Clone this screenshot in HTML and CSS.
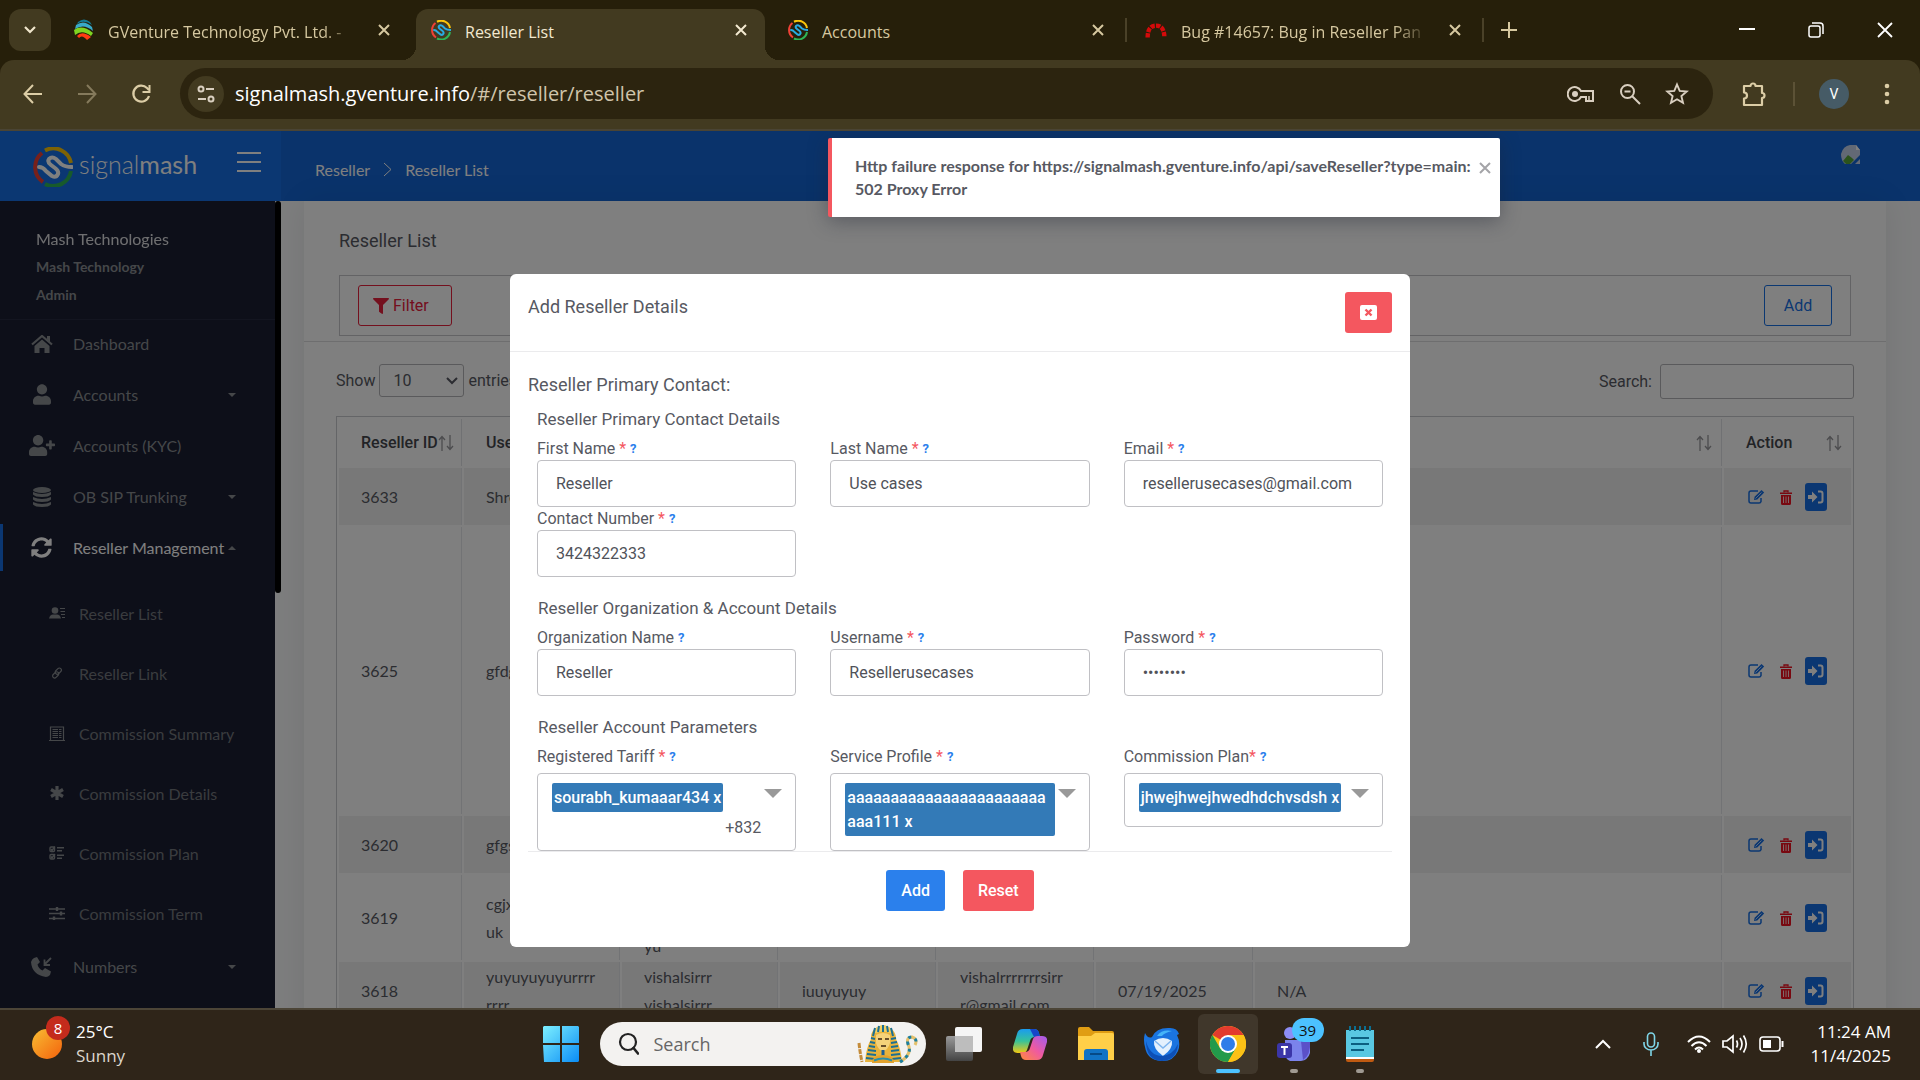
FILE: index.html
```html
<!DOCTYPE html>
<html lang="en">
<head>
<meta charset="utf-8">
<title>Reseller List</title>
<link rel="stylesheet" href="styles.css">
</head>
<body>
<svg class="sprite" aria-hidden="true">
  <symbol id="i-close" viewBox="0 0 14 14"><path d="M2 2l10 10M12 2L2 12" fill="none" stroke="currentColor" stroke-width="2"/></symbol>
  <symbol id="i-mash" viewBox="0 0 40 40"><g fill="none" stroke-width="4">
    <path d="M12 3.500A18 18 0 0 1 38 16" stroke="#fbc50b"/><path d="M10 35A18 18 0 0 1 9 6" stroke="#ef4136"/><path d="M38 24A18 18 0 0 1 12 37" stroke="#2fb457"/>
    <path d="M6 20Q10 20 13 24L19 29Q23 31 25 27Q26 24 22 21L18 18Q14 15 16 12Q19 9 23 12L28 17Q32 20 39 20" stroke="var(--mark, #29abe2)" stroke-linecap="round"/></g></symbol>
  <symbol id="i-sort" viewBox="0 0 16 16"><path d="M4 16V2M1 5l3-3.500L7 5M12 0v14M9 11l3 3.500 3-3.500" fill="none" stroke="currentColor" stroke-width="1.300"/></symbol>
  <symbol id="i-edit" viewBox="0 0 17 16"><path d="M13 9v3.500A2 2 0 0 1 11 14H3a2 2 0 0 1-2-2V4a2 2 0 0 1 2-2h7" fill="none" stroke="currentColor" stroke-width="1.500"/><path d="M6 11l.6-3.200L13.500 1l2.700 2.600L9.300 10.400z" fill="currentColor"/><path d="M7.500 9.500l6-6" stroke="#fff" stroke-width=".7"/></symbol>
  <symbol id="i-trash" viewBox="0 0 12 15"><path d="M4 2.500V1h4v1.500" fill="none" stroke="currentColor" stroke-width="1.300"/><path d="M0 2.500h12V4H0zM1 5h10v8.500a1.500 1.500 0 0 1-1.500 1.500h-7A1.500 1.500 0 0 1 1 13.500z" fill="currentColor"/><path d="M3.500 6.500V13M6 6.500V13M8.500 6.500V13" stroke="#fff" stroke-width=".8"/></symbol>
  <symbol id="i-login" viewBox="0 0 16 14"><path d="M0 5h4V1.500L9.500 7 4 12.500V9H0z" fill="currentColor"/><path d="M10 1.500h2.500a2 2 0 0 1 2 2v7a2 2 0 0 1-2 2H10" fill="none" stroke="currentColor" stroke-width="2"/></symbol>
</svg>

<div class="tabstrip">
  <button class="tab-search" aria-label="Search tabs"><svg width="14" height="12" viewBox="0 0 14 12"><path d="M2 3l5 5 5-5" fill="none" stroke="currentColor" stroke-width="2.200"/></svg></button>
  <div class="tab">
    <svg width="20" height="22" viewBox="0 0 20 22"><path d="M4 3Q10-2 16 3L18 6Q10 0 3 5z" fill="#147a96"/><path d="M2 6Q10 0 18 8L19 12Q10 4 1 10z" fill="#38a9c9"/><path d="M0 11Q8 5 19 14L17 17Q8 10 1 16z" fill="#7ed321"/><path d="M3 17Q8 11 17 18L13 21Q8 15 5 19z" fill="#ff3b12"/></svg>
    <span class="tab-title fade">GVenture Technology Pvt. Ltd. -</span>
    <button class="tab-close" aria-label="Close tab"><svg width="14" height="14"><use href="#i-close"/></svg></button>
  </div>
  <span class="tab-gap"></span>
  <div class="tab active">
    <svg width="20" height="20"><use href="#i-mash"/></svg>
    <span class="tab-title">Reseller List</span>
    <button class="tab-close" aria-label="Close tab"><svg width="14" height="14"><use href="#i-close"/></svg></button>
  </div>
  <span class="tab-gap"></span>
  <div class="tab">
    <svg width="20" height="20"><use href="#i-mash"/></svg>
    <span class="tab-title">Accounts</span>
    <button class="tab-close" aria-label="Close tab"><svg width="14" height="14"><use href="#i-close"/></svg></button>
  </div>
  <span class="tab-gap line"></span>
  <div class="tab">
    <svg width="22" height="17" viewBox="0 0 25 17"><path d="M3 16.500Q3 3 12.500 3T22 16.500" fill="none" stroke="#d40a0a" stroke-width="5" stroke-dasharray="5 1.200"/></svg>
    <span class="tab-title fade">Bug #14657: Bug in Reseller Pan</span>
    <button class="tab-close" aria-label="Close tab"><svg width="14" height="14"><use href="#i-close"/></svg></button>
  </div>
  <span class="tab-gap line"></span>
  <button class="new-tab" aria-label="New tab"><svg width="16" height="16"><path d="M8 0v16M0 8h16" stroke="currentColor" stroke-width="2"/></svg></button>
  <div class="window-buttons">
    <button aria-label="Minimize"><svg width="16" height="16"><path d="M0 7h16" stroke="currentColor" stroke-width="2"/></svg></button>
    <button aria-label="Restore"><svg width="16" height="16"><rect x="1" y="4" width="11" height="11" rx="2" fill="none" stroke="currentColor" stroke-width="1.500"/><path d="M4 1h8a3 3 0 0 1 3 3v8" fill="none" stroke="currentColor" stroke-width="1.500"/></svg></button>
    <button aria-label="Close"><svg width="16" height="16"><path d="M1 1l14 14M15 1L1 15" stroke="currentColor" stroke-width="1.800"/></svg></button>
  </div>
</div>

<div class="toolbar">
  <button class="nav" aria-label="Back"><svg width="20" height="20"><path d="M19 10H2M10 1L1.500 10 10 19" fill="none" stroke="currentColor" stroke-width="2"/></svg></button>
  <button class="nav off" aria-label="Forward"><svg width="20" height="20"><path d="M1 10h17M10 1l8.500 9L10 19" fill="none" stroke="currentColor" stroke-width="2"/></svg></button>
  <button class="nav" aria-label="Reload"><svg width="20" height="20"><path d="M18 12a8 8 0 1 1-2-8l2 2" fill="none" stroke="currentColor" stroke-width="2.200"/><path d="M18.500 1v7h-7" fill="none" stroke="currentColor" stroke-width="2"/></svg></button>
  <div class="omnibox">
    <button class="site-info" aria-label="Site information"><svg width="18" height="18"><g fill="none" stroke="currentColor" stroke-width="2"><circle cx="4" cy="4" r="2.500"/><path d="M9 4h8M1 14h8"/><circle cx="14" cy="14" r="2.500"/></g></svg></button>
    <span class="url"><b>signalmash.gventure.info</b>/#/reseller/reseller</span>
    <button aria-label="Passwords"><svg width="28" height="18" viewBox="0 0 28 18"><path d="M14 6a7 7 0 1 0 0 6h5v4h7V6z" fill="none" stroke="currentColor" stroke-width="2"/><circle cx="8" cy="9" r="3" fill="currentColor"/><path d="M22 11v4" stroke="currentColor" stroke-width="1.500"/></svg></button>
    <button aria-label="Zoom"><svg width="22" height="22"><circle cx="8.500" cy="8.500" r="6.500" fill="none" stroke="currentColor" stroke-width="2"/><path d="M13 13l8 8M5.500 8.500h6" stroke="currentColor" stroke-width="2"/></svg></button>
    <button aria-label="Bookmark"><svg width="24" height="24" viewBox="0 0 24 24"><path d="M12 2.500l2.700 6.400 7 .6-5.300 4.600 1.600 6.800-6-3.600-6 3.600 1.600-6.800L2.300 9.500l7-.6z" fill="none" stroke="currentColor" stroke-width="1.900"/></svg></button>
  </div>
  <button class="ext" aria-label="Extensions"><svg width="26" height="26" viewBox="0 0 26 26"><path d="M3 5h6.500a2.500 2.500 0 0 1 5 0H21v7a2.500 2.500 0 0 1 0 5v7H3v-6.500a3 3 0 0 0 0-6z" fill="none" stroke="currentColor" stroke-width="2.200" stroke-linejoin="round"/></svg></button>
  <span class="bar"></span>
  <button class="avatar" aria-label="Profile">V</button>
  <button class="dots" aria-label="Menu"><svg width="6" height="22"><g fill="currentColor"><circle cx="3" cy="3" r="2.300"/><circle cx="3" cy="11" r="2.300"/><circle cx="3" cy="19" r="2.300"/></g></svg></button>
</div>

<div class="page">
  <header class="topbar">
    <div class="brand">
      <svg class="brand-mark" width="40" height="40"><use href="#i-mash"/></svg>
      <span class="brand-name">signal<b>mash</b></span>
      <button class="burger" aria-label="Toggle menu"><svg width="24" height="20"><path d="M0 1h24M0 10h24M0 19h24" stroke="currentColor" stroke-width="2"/></svg></button>
    </div>
    <nav class="crumbs"><a href="#">Reseller</a><svg width="9" height="15"><path d="M1 1l7 6.500-7 6.500" fill="none" stroke="currentColor"/></svg><a href="#">Reseller List</a></nav>
    <svg class="broken" width="19" height="19" viewBox="0 0 19 19"><path d="M9 0h6l4 5v5l-9 9H4Q0 16 0 9 2 1 9 0z" fill="#c5d3ea"/><path d="M15 0v5h4z" fill="#fff"/><path d="M2 16l5-6 4 3 2 2-4 4H5z" fill="#57a639"/><path d="M19 14l-5 5h5z" fill="#c5d3ea"/></svg>
  </header>

  <div class="columns">
    <aside class="sidebar">
      <div class="who"><span>Mash Technologies</span><b>Mash Technology</b><b>Admin</b></div>
      <ul class="menu">
        <li><a href="#"><svg width="22" height="18" viewBox="0 0 22 18"><path d="M1 9.500L11 1l10 8.500" fill="none" stroke="currentColor" stroke-width="2.200"/><path d="M16 1h3v6l-3-2.500zM11 4.500l7.500 6.500v7h-5v-5h-5v5h-5v-7z" fill="currentColor"/></svg>Dashboard</a></li>
        <li><a href="#"><svg width="18" height="21" viewBox="0 0 448 512"><path fill="currentColor" d="M224 256c70.700 0 128-57.300 128-128S294.700 0 224 0 96 57.300 96 128s57.300 128 128 128zm89.600 32h-16.700c-22.200 10.200-46.900 16-72.900 16s-50.600-5.800-72.900-16h-16.700C60.200 288 0 348.200 0 422.400V464c0 26.500 21.500 48 48 48h352c26.500 0 48-21.500 48-48v-41.600c0-74.200-60.200-134.400-134.400-134.400z"/></svg>Accounts<i class="caret"></i></a></li>
        <li><a href="#"><svg width="26" height="21" viewBox="0 0 640 512"><path fill="currentColor" d="M624 208h-64v-64c0-8.800-7.200-16-16-16h-32c-8.800 0-16 7.200-16 16v64h-64c-8.800 0-16 7.200-16 16v32c0 8.800 7.200 16 16 16h64v64c0 8.800 7.200 16 16 16h32c8.800 0 16-7.200 16-16v-64h64c8.800 0 16-7.200 16-16v-32c0-8.800-7.200-16-16-16zm-400 48c70.700 0 128-57.300 128-128S294.700 0 224 0 96 57.300 96 128s57.300 128 128 128zm89.600 32h-16.700c-22.200 10.200-46.900 16-72.900 16s-50.600-5.800-72.900-16h-16.700C60.200 288 0 348.200 0 422.400V464c0 26.500 21.500 48 48 48h352c26.500 0 48-21.500 48-48v-41.600c0-74.200-60.200-134.400-134.400-134.400z"/></svg>Accounts (KYC)</a></li>
        <li><a href="#"><svg width="18" height="20" viewBox="0 0 18 20"><g fill="currentColor"><ellipse cx="9" cy="3" rx="9" ry="3"/><path d="M0 5Q9 9 18 5v2.500Q16 10 9 10T0 7.500zM0 10Q9 14 18 10v2.500Q16 15 9 15T0 12.500zM0 15Q9 19 18 15v2.500Q16 20 9 20T0 17.500z"/></g></svg>OB SIP Trunking<i class="caret"></i></a></li>
        <li class="open"><a href="#"><svg width="21" height="21" viewBox="0 0 512 512"><path fill="currentColor" d="M370.720 133.280C339.458 104.008 298.888 87.962 255.848 88c-77.458.068-144.328 53.178-162.791 126.850-1.344 5.363-6.122 9.150-11.651 9.150H24.103c-7.498 0-13.194-6.807-11.807-14.176C33.933 94.924 134.813 8 256 8c66.448 0 126.791 26.136 171.315 68.685L463.030 40.970C478.149 25.851 504 36.559 504 57.941V192c0 13.255-10.745 24-24 24H345.941c-21.382 0-32.090-25.851-16.971-40.971l41.750-41.749zM32 296h134.059c21.382 0 32.090 25.851 16.971 40.971l-41.750 41.750c31.262 29.273 71.835 45.319 114.876 45.280 77.418-.07 144.315-53.144 162.787-126.849 1.344-5.363 6.122-9.150 11.651-9.150h57.304c7.498 0 13.194 6.807 11.807 14.176C478.067 417.076 377.187 504 256 504c-66.448 0-126.791-26.136-171.315-68.685L48.970 471.030C33.851 486.149 8 475.441 8 454.059V320c0-13.255 10.745-24 24-24z"/></svg>Reseller Management<i class="caret up"></i></a>
          <ul class="submenu">
            <li><a href="#"><svg width="16" height="12" viewBox="0 0 16 12"><g fill="currentColor"><circle cx="6" cy="3.500" r="3.300"/><path d="M0 11.500Q1 7.500 4 7.500h4q3 0 4 4z"/></g><path d="M11 1.500h5M11.500 4.500H16M12 7.500h4M13 10.500h3" stroke="currentColor"/></svg>Reseller List</a></li>
            <li><a href="#"><svg width="12" height="12" viewBox="0 0 12 12"><g fill="none" stroke="currentColor" stroke-width="1.200"><rect x="5.300" y=".6" width="4" height="7" rx="2" transform="rotate(45 7.300 4.100)"/><rect x="2.700" y="4.400" width="4" height="7" rx="2" transform="rotate(45 4.700 7.900)"/></g></svg>Reseller Link</a></li>
            <li><a href="#"><svg width="16" height="15" viewBox="0 0 16 15"><path d="M1.500 14V1h13v13M0 14.500h16" fill="none" stroke="currentColor" stroke-width="1.200"/><path d="M3.500 3.500h9M3.500 5.500h9M3.500 7.500h9M3.500 9.500h9M3.500 11.500h9" stroke="currentColor" stroke-dasharray="5.500 1"/></svg>Commission Summary</a></li>
            <li><a href="#"><svg width="14" height="14" viewBox="0 0 14 14"><path d="M7 0v14M1 3.500l12 7M13 3.500l-12 7" stroke="currentColor" stroke-width="3.200"/></svg>Commission Details</a></li>
            <li><a href="#"><svg width="16" height="14" viewBox="0 0 16 14"><g fill="none" stroke="currentColor" stroke-width="1.400"><rect x="1" y="1" width="4.500" height="4.500" rx="1"/><rect x="1" y="8.500" width="4.500" height="4.500" rx="1"/><path d="M8 1.700h7M8 4.700h5M8 9.200h7M8 12.200h5M2 3l1 1.500L6 .5M2 10.500L3 12l3-4"/></g></svg>Commission Plan</a></li>
            <li><a href="#"><svg width="16" height="13" viewBox="0 0 16 13"><path d="M0 2h16M0 6.500h16M0 11.500h16" stroke="currentColor" stroke-width="1.600"/><path d="M8 0v4M12 4.500v4M5 9.500v4" stroke="currentColor" stroke-width="2.400"/></svg>Commission Term</a></li>
          </ul>
        </li>
        <li><a href="#"><svg width="21" height="20" viewBox="0 0 21 20"><path d="M3 1l3-1 3 5-2.500 2.500q1 4 5 6L14 11l6 3.500-1 3.500q-2 2-4 2Q1 18 0 5 1 2 3 1z" fill="currentColor"/><path d="M20 1l-6 6M13.500 2.500V8H19" fill="none" stroke="currentColor" stroke-width="1.800"/></svg>Numbers<i class="caret"></i></a></li>
      </ul>
    </aside>
    <div class="rail"></div>

    <main class="content">
      <section class="card">
        <div class="card-head">
          <h1>Reseller List</h1>
          <div class="actions">
            <button class="btn outline-red"><svg width="16" height="16" viewBox="0 0 512 512"><path fill="currentColor" d="M487.976 0H24.028C2.710 0-8.047 25.866 7.058 40.971L192 225.941V432c0 7.831 3.821 15.170 10.237 19.662l80 55.980C298.020 518.690 320 507.493 320 487.980V225.941l184.947-184.970C520.021 25.896 509.338 0 487.976 0z"/></svg>Filter</button>
            <button class="btn outline-blue">Add</button>
          </div>
        </div>
        <div class="card-body">
          <div class="controls">
            <label>Show <span class="select"><select><option>10</option><option>25</option></select><svg width="14" height="14"><path d="M2 4l5 5 5-5" fill="none" stroke="currentColor" stroke-width="2"/></svg></span> entries</label>
            <label>Search: <input class="search" type="search"></label>
          </div>
          <table class="grid">
            <colgroup><col class="c-id"><col class="c"><col class="c"><col class="c"><col class="c"><col class="c-date"><col class="c-wide"><col class="c-act"></colgroup>
            <thead><tr>
              <th><div>Reseller ID<svg width="16" height="16"><use href="#i-sort"/></svg></div></th>
              <th><div>Username<svg width="16" height="16"><use href="#i-sort"/></svg></div></th>
              <th></th><th></th><th></th><th></th>
              <th><div><span></span><svg width="16" height="16"><use href="#i-sort"/></svg></div></th>
              <th><div>Action<svg width="16" height="16"><use href="#i-sort"/></svg></div></th>
            </tr></thead>
            <tbody>
              <tr><td>3633</td><td>Shreya</td><td></td><td></td><td></td><td></td><td></td><td><div class="row-actions"><a href="#" aria-label="Edit"><svg width="17" height="16"><use href="#i-edit"/></svg></a><a href="#" class="del" aria-label="Delete"><svg width="12" height="15"><use href="#i-trash"/></svg></a><a href="#" class="login" aria-label="Log in"><svg width="16" height="14"><use href="#i-login"/></svg></a></div></td></tr>
              <tr class="tall"><td>3625</td><td>gfdgdf</td><td></td><td></td><td></td><td></td><td></td><td><div class="row-actions"><a href="#" aria-label="Edit"><svg width="17" height="16"><use href="#i-edit"/></svg></a><a href="#" class="del" aria-label="Delete"><svg width="12" height="15"><use href="#i-trash"/></svg></a><a href="#" class="login" aria-label="Log in"><svg width="16" height="14"><use href="#i-login"/></svg></a></div></td></tr>
              <tr><td>3620</td><td>gfgsdf</td><td></td><td></td><td></td><td></td><td></td><td><div class="row-actions"><a href="#" aria-label="Edit"><svg width="17" height="16"><use href="#i-edit"/></svg></a><a href="#" class="del" aria-label="Delete"><svg width="12" height="15"><use href="#i-trash"/></svg></a><a href="#" class="login" aria-label="Log in"><svg width="16" height="14"><use href="#i-login"/></svg></a></div></td></tr>
              <tr><td>3619</td><td>cgjxhgjy<br>uk</td><td>yuyuyu<br>yuyuyu<br>yu</td><td></td><td></td><td></td><td></td><td><div class="row-actions"><a href="#" aria-label="Edit"><svg width="17" height="16"><use href="#i-edit"/></svg></a><a href="#" class="del" aria-label="Delete"><svg width="12" height="15"><use href="#i-trash"/></svg></a><a href="#" class="login" aria-label="Log in"><svg width="16" height="14"><use href="#i-login"/></svg></a></div></td></tr>
              <tr><td>3618</td><td>yuyuyuyuyurrrr<br>rrrr</td><td>vishalsirrr<br>vishalsirrr</td><td>iuuyuyuy</td><td>vishalrrrrrrrsirr<br>r@gmail.com</td><td>07/19/2025</td><td>N/A</td><td><div class="row-actions"><a href="#" aria-label="Edit"><svg width="17" height="16"><use href="#i-edit"/></svg></a><a href="#" class="del" aria-label="Delete"><svg width="12" height="15"><use href="#i-trash"/></svg></a><a href="#" class="login" aria-label="Log in"><svg width="16" height="14"><use href="#i-login"/></svg></a></div></td></tr>
            </tbody>
          </table>
        </div>
      </section>
    </main>
  </div>

  <div class="backdrop">
    <form class="modal">
      <div class="modal-head">
        <h2>Add Reseller Details</h2>
        <button type="button" class="btn red close" aria-label="Close"><svg width="17" height="15" viewBox="0 0 17 15"><rect width="17" height="15" rx="2" fill="#fff"/><path d="M5.500 4.500l6 6M11.500 4.500l-6 6" stroke="#f4575f" stroke-width="2.400"/></svg></button>
      </div>
      <div class="modal-body">
        <h3>Reseller Primary Contact:</h3>
        <div class="fields">
          <h4>Reseller Primary Contact Details</h4>
          <div class="field"><label for="fn">First Name <em>*</em> <i>?</i></label><input id="fn" value="Reseller"></div>
          <div class="field"><label for="ln">Last Name <em>*</em> <i>?</i></label><input id="ln" value="Use cases"></div>
          <div class="field"><label for="em">Email <em>*</em> <i>?</i></label><input id="em" type="email" value="resellerusecases@gmail.com"></div>
          <div class="field"><label for="cn">Contact Number <em>*</em> <i>?</i></label><input id="cn" value="3424322333"></div>
          <h4 class="next">Reseller Organization &amp; Account Details</h4>
          <div class="field"><label for="on">Organization Name <i>?</i></label><input id="on" value="Reseller"></div>
          <div class="field"><label for="un">Username <em>*</em> <i>?</i></label><input id="un" value="Resellerusecases"></div>
          <div class="field"><label for="pw">Password <em>*</em> <i>?</i></label><input id="pw" type="password" value="abcd1234"></div>
          <h4 class="next">Reseller Account Parameters</h4>
          <div class="field multi"><label id="rt">Registered Tariff <em>*</em> <i>?</i></label><div class="picker" role="group" aria-labelledby="rt"><div class="tags"><span class="tag">sourabh_kumaaar434 <a href="#">x</a></span><span class="more">+832</span></div><b class="arrow"></b></div></div>
          <div class="field multi"><label id="sp">Service Profile <em>*</em> <i>?</i></label><div class="picker" role="group" aria-labelledby="sp"><div class="tags"><span class="tag">aaaaaaaaaaaaaaaaaaaaaaaaaa111 <a href="#">x</a></span></div><b class="arrow"></b></div></div>
          <div class="field multi"><label id="cp">Commission Plan<em>*</em> <i>?</i></label><div class="picker" role="group" aria-labelledby="cp"><div class="tags"><span class="tag">jhwejhwejhwedhdchvsdsh <a href="#">x</a></span></div><b class="arrow"></b></div></div>
        </div>
        <div class="modal-foot"><button type="button" class="btn blue">Add</button><button type="reset" class="btn red">Reset</button></div>
      </div>
    </form>
  </div>

  <div class="toast" role="alert">
    <p>Http failure response for https://signalmash.gventure.info/api/saveReseller?type=main: 502 Proxy Error</p>
    <button aria-label="Dismiss"><svg width="14" height="14"><use href="#i-close"/></svg></button>
  </div>
</div>

<footer class="taskbar">
  <div class="weather">
    <div class="sun"><svg width="30" height="30"><defs><linearGradient id="g-sun" x1="0" y1="0" x2="1" y2="1"><stop stop-color="#f8bd33"/><stop offset="1" stop-color="#f4620c"/></linearGradient></defs><circle cx="15" cy="15" r="15" fill="url(#g-sun)"/></svg><span class="count">8</span></div>
    <div class="two"><span>25°C</span><span class="soft">Sunny</span></div>
  </div>
  <div class="apps">
    <button class="app" aria-label="Start"><svg width="36" height="36"><defs><linearGradient id="g-win" x1="0" y1="0" x2="1" y2="1" ><stop stop-color="#7df0ff"/><stop offset="1" stop-color="#0a8cf5"/></linearGradient></defs><path d="M1 0h16v17H0V1zM19 0h16l1 1v16H19zM0 19h17v17H1zM19 19h17v16l-1 1H19z" fill="url(#g-win)"/></svg></button>
    <label class="finder"><svg width="24" height="24"><circle cx="13" cy="10" r="8" fill="none" stroke="#222" stroke-width="2.200"/><path d="M18.500 16L23 21.500" stroke="#222" stroke-width="2.600" stroke-linecap="round"/></svg><input type="text" placeholder="Search" aria-label="Search">
      <svg width="62" height="40" viewBox="0 0 62 40"><path d="M9 38Q10 24 15 15 14 4 27 1 40 4 40 15 45 24 46 38z" fill="#e8b33c"/><path d="M17 8q3-6 10-7 7 1 10 7l-3 1q-7-3-14 0z" fill="#f2cf62"/><path d="M19 4l-2 8M23 2l-1 6M27 1v7M31 2l1 6M35 4l2 8M15 14l4 1M14 18l5 1M13 22l6 1M12 26l8 1M11 30l9 1M10 34l9 1M40 14l-5 1M41 18l-6 1M42 22l-7 1M43 26l-8 1M44 30l-9 1M45 34l-9 1" stroke="#1b6f93" stroke-width="2"/><path d="M20 11q7-4 14 0v8q-2 7-7 8-5-1-7-8z" fill="#f4d27a"/><path d="M22 15h4M29 15h4M25 22h5" stroke="#3a2410" stroke-width="1.500"/><path d="M25.500 26h3v6h-3z" fill="#1b5f93"/><path d="M16 39q0-8 11-8t11 8z" fill="#e2a22d"/><path d="M18 36.500q9-4 18 0" stroke="#2a8fa8" stroke-width="2" fill="none"/><path d="M44 38Q57 30 52 20q-2-7 4-7 6 2 3 8" fill="none" stroke="#e4c06a" stroke-width="3"/><path d="M44 38Q57 30 52 20q-2-7 4-7 6 2 3 8" fill="none" stroke="#1b7fa0" stroke-width="3" stroke-dasharray="3 4"/><path d="M3 19q1 10 3 19" stroke="#c48c3a" stroke-width="3" fill="none" stroke-dasharray="5 1"/></svg>
    </label>
    <button class="app" aria-label="Task view"><svg width="36" height="34"><defs><linearGradient id="g-tv" x1="0" y1="0" x2="0" y2="1"><stop stop-color="#999"/><stop offset="1" stop-color="#444"/></linearGradient></defs><rect y="9" width="27" height="25" rx="2" fill="url(#g-tv)"/><rect x="9" width="27" height="25" rx="2" fill="#f5f5f5"/><path d="M9 9h18v16H9z" fill="#bdbdbd"/></svg></button>
    <button class="app" aria-label="Copilot"><svg width="34" height="31" viewBox="0 0 34 31"><defs><linearGradient id="g-c1" x1="0" y1="0" x2="0" y2="1"><stop stop-color="#1a9bf0"/><stop offset=".5" stop-color="#36c29a"/><stop offset="1" stop-color="#f2c811"/></linearGradient><linearGradient id="g-c2" x1="1" y1="0" x2="0" y2="1"><stop stop-color="#a05cf0"/><stop offset=".5" stop-color="#ef5aa0"/><stop offset="1" stop-color="#ff8a3c"/></linearGradient></defs><path d="M10 0h11q4 0 5 4l1 4h-5q-4 0-5 4l-3 9q-1 3-5 3H5q-6 0-5-6L4 5q1-5 6-5z" fill="url(#g-c1)"/><path d="M17 0h4q4 0 5 4l1 4h-6z" fill="#1646c8"/><path d="M24 31H13q-4 0-5-4l-1-4h5q4 0 5-4l3-9q1-3 5-3h4q6 0 5 6l-4 13q-1 5-6 5z" fill="url(#g-c2)"/></svg></button>
    <button class="app" aria-label="File Explorer"><svg width="36" height="34" viewBox="0 0 36 34"><path d="M0 2q0-2 2-2h9l4 4h19q2 0 2 2v8H0z" fill="#e09d13"/><path d="M0 9h13l4-3h17q2 0 2 2v25H0z" fill="#ffcf48"/><path d="M6 33V25q0-3 3-3h18q3 0 3 3v8z" fill="#1173c4"/><path d="M12 27h12" stroke="#064a86" stroke-width="2"/></svg></button>
    <button class="app" aria-label="Thunderbird"><svg width="36" height="35" viewBox="0 0 36 35"><path d="M1 6Q4 12 8 10 12 1 24 1q9-1 11 6l-2 1Q37 16 34 24 29 35 17 34 3 33 1 20-1 13 1 6z" fill="#1a74e0"/><path d="M13 9Q18 2 28 4 20 6 18 9z" fill="#45b4f8"/><path d="M10 14q9-6 18 0 1 8-9 15-10-7-9-15z" fill="#e4f1fd"/><path d="M11 14l8 7 8-7" fill="none" stroke="#7fb6ef" stroke-width="1.500"/><path d="M2 14q4 15 16 15 11-1 16-12-1 16-16 17Q2 33 2 14z" fill="#0d4fb5"/></svg></button>
    <button class="app current" aria-label="Chrome"><svg width="36" height="36" viewBox="0 0 36 36"><circle cx="18" cy="18" r="18" fill="#fbc116"/><path d="M18 18L2.400 9A18 18 0 0 1 33.600 9H18z" fill="#e33b2e"/><path d="M2.400 9A18 18 0 0 0 18 36L25.800 22.500 18 26 10.200 22.500z" fill="#229a4b"/><path d="M33.600 9H18l7.800 13.500L18 36A18 18 0 0 0 33.600 9z" fill="#fbc116"/><circle cx="18" cy="18" r="9" fill="#fff"/><circle cx="18" cy="18" r="7" fill="#2f7de9"/></svg></button>
    <button class="app running" aria-label="Teams"><svg width="34" height="34" viewBox="0 0 34 34"><circle cx="13" cy="6" r="6" fill="#8d8df5"/><circle cx="27" cy="10" r="4" fill="#6a5fe0"/><path d="M8 13h15q10 0 10 6v7q-2 7-9 8H13q-5-2-5-8z" fill="#7b83eb"/><path d="M24 14h9q1 14-7 19z" fill="#5b50c8"/><rect y="16" width="15" height="15" rx="3" fill="#3b36a8"/><path d="M4 20h7M7.500 20v8" stroke="#fff" stroke-width="2"/></svg><span class="count blue">39</span></button>
    <button class="app running" aria-label="Notepad"><svg width="28" height="36" viewBox="0 0 28 36"><path d="M0 4h28v29H0z" fill="#59c8e2"/><path d="M0 31h28v2H0z" fill="#fff"/><path d="M0 33h28v1q0 2-2 2H2q-2 0-2-2z" fill="#c05a11"/><path d="M4 0v5M9 0v5M14 0v5M19 0v5M24 0v5" stroke="#0b6f92" stroke-width="2"/><path d="M5 12h18M5 18h18M5 24h13" stroke="#0b5f80" stroke-width="2"/></svg></button>
  </div>
  <div class="tray">
    <svg width="16" height="10"><path d="M1 9l7-7 7 7" fill="none" stroke="#fff" stroke-width="2"/></svg>
    <svg class="mic" width="16" height="24"><rect x="4.500" y="1" width="7" height="14" rx="3.500" fill="none" stroke="#7fd6e8" stroke-width="1.600"/><path d="M1 10v2a7 6 0 0 0 14 0v-2M8 18v6" fill="none" stroke="#7fd6e8" stroke-width="1.600"/></svg>
    <svg class="wifi" width="24" height="18"><g fill="none" stroke="#fff" stroke-width="2"><path d="M1 7q11-11 22 0M4.500 11q7.500-7.500 15 0M8 14.500q4-4 8 0"/></g><circle cx="12" cy="16" r="2" fill="#fff"/></svg>
    <svg width="26" height="20"><g fill="none" stroke="#fff" stroke-width="1.700"><path d="M1 7h4l6-5v16l-6-5H1zM14.500 6.500q2 3.500 0 7M18 4q4 6 0 12M21.500 1.500q5.500 8.500 0 17"/></g></svg>
    <svg width="25" height="16"><rect x="1" y="1" width="20" height="14" rx="3" fill="none" stroke="#fff" stroke-width="1.600"/><rect x="4" y="4" width="8" height="8" fill="#fff"/><path d="M23.500 5v6" stroke="#fff" stroke-width="2"/></svg>
    <div class="two clock"><span>11:24 AM</span><span>11/4/2025</span></div>
  </div>
</footer>
</body>
</html>
```
FILE: styles.css
```css
* { box-sizing: border-box; }
body { margin: 0; height: 100vh; display: flex; flex-direction: column; overflow: hidden; background: #261f0a; font-family: Roboto, sans-serif; font-size: 16px; }
button { margin: 0; padding: 0; border: 0; background: none; color: inherit; font: inherit; }
svg { display: block; flex: none; }
a { color: inherit; text-decoration: none; }
ul { list-style: none; margin: 0; padding: 0; }
h1, h2, h3, h4 { margin: 0; font-weight: 400; }
p { margin: 0; }
.sprite { position: absolute; width: 0; height: 0; }

/* Browser tabs */
.tabstrip { flex: none; height: 60px; display: flex; align-items: flex-end; padding-left: 9px; color: #d6c8a0; font-family: "Open Sans", sans-serif; font-size: 16px; }
.tab-search { width: 42px; height: 42px; margin: 0 8px 9px 0; border-radius: 12px; background: #423a20; color: #f0e6cc; display: grid; place-items: center; }
.tab { flex: 0 1 349px; min-width: 0; height: 51px; padding: 0 17px 9px 15px; display: flex; align-items: center; }
.tab-title { flex: 1; min-width: 0; margin: 4px 14px 0 14px; white-space: nowrap; overflow: hidden; }
.fade { -webkit-mask-image: linear-gradient(to right, #000 84%, transparent 98%); mask-image: linear-gradient(to right, #000 84%, transparent 98%); }
.tab.active { position: relative; background: #423a20; color: #f3e9d0; border-radius: 12px 12px 0 0; }
.tab.active::before, .tab.active::after { content: ""; position: absolute; bottom: 0; width: 14px; height: 14px; }
.tab.active::before { left: -14px; background: radial-gradient(circle at 0 0, transparent 14px, #423a20 14px); }
.tab.active::after { right: -14px; background: radial-gradient(circle at 100% 0, transparent 14px, #423a20 14px); }
.tab-gap { flex: none; width: 8px; height: 24px; margin-bottom: 18px; }
.tab-gap.line { border: solid transparent; border-width: 0 3px; background: #4a4128; background-clip: padding-box; }
.new-tab { margin: 0 0 22px 14px; }
.window-buttons { margin: 0 27px 22px auto; display: flex; gap: 53px; color: #fff; }

/* Address bar */
.toolbar { flex: none; height: 71px; padding: 9px 30px 11px 23px; display: flex; align-items: center; background: #423a20; color: #dccda6; border-radius: 14px 14px 0 0; border-bottom: 2px solid #4a4434; }
.nav { width: 20px; margin-right: 34px; }
.nav:nth-child(3) { margin-right: 29px; }
.off { color: #857a5c; }
.omnibox { flex: 1; height: 51px; padding: 0 24px 0 8px; display: flex; align-items: center; gap: 24px; background: #2c240f; border-radius: 26px; color: #d9cfc0; }
.site-info { width: 36px; height: 36px; border-radius: 18px; background: #423a20; display: grid; place-items: center; }
.url { flex: 1; margin-left: -13px; font-family: "Open Sans", sans-serif; font-size: 20px; color: #d0c4ab; white-space: nowrap; }
.url b { font-weight: 400; color: #fff; }
.ext { margin-left: 28px; }
.bar { width: 2px; height: 24px; margin: 0 24px 0 26px; background: #5c5236; }
.avatar { width: 30px; height: 30px; border-radius: 15px; background: #465b66; color: #fff; font-size: 14px; }
.dots { margin-left: 35px; }

/* Application */
.page { position: relative; flex: 1; min-height: 0; display: flex; flex-direction: column; overflow: hidden; background: #fafbfc; color: #575962; }
.topbar { flex: none; height: 70px; display: flex; background: #1466d6; color: #fff; font-family: Lato, sans-serif; }
.brand { width: 281px; padding: 2px 20px 0 33px; display: flex; align-items: center; background: #166fe4; }
.brand-mark { --mark: #fff; }
.brand-name { flex: 1; margin: 0 0 6px 6px; font-size: 25px; font-weight: 300; }
.burger { margin-bottom: 10px; }
.crumbs { flex: 1; display: flex; align-items: center; gap: 13px; padding: 7px 0 0 34px; font-size: 16px; }
.broken { margin: 14px 60px 0 0; }
.columns { flex: 1; min-height: 0; display: flex; }
.sidebar { flex: none; width: 275px; overflow: hidden; background: #1a1e32; color: #8a8e92; font-family: Lato, sans-serif; font-size: 16px; }
.who { height: 119px; padding: 24px 36px 0; display: flex; flex-direction: column; border-bottom: 1px solid #262a40; line-height: 28px; }
.who span { color: #fff; opacity: .85; }
.who b { font-size: 14px; }
.menu { display: flex; flex-direction: column; gap: 4px; }
.menu a { height: 47px; padding-right: 39px; display: grid; grid-template-columns: 73px 1fr auto; align-items: center; white-space: nowrap; }
.menu a svg { justify-self: center; margin-left: 10px; }
.caret { border: 4px solid transparent; border-top-color: currentColor; border-bottom: 0; }
.caret.up { border-top: 0; border-bottom: 4px solid; border-left-color: transparent; border-right-color: transparent; }
.open > a { color: #fff; box-shadow: inset 3px 0 #166fe4; }
.open > a .caret { color: #8a8e92; }
.submenu { padding-top: 12px; margin-bottom: -4px; }
.submenu a { height: 60px; grid-template-columns: 79px 1fr; color: #74787e; padding-right: 0; }
.submenu a svg { margin-left: 35px; color: #8a8e92; }
.rail { flex: none; width: 6px; height: 392px; background: #000; border-radius: 3px; }
.content { flex: 1; min-width: 0; padding: 0 34px 0 23px; }
.card { background: #fff; box-shadow: 0 0 30px rgba(0, 0, 0, .08); min-height: 100%; }
.card-head { padding: 25px 35px 5px; border-bottom: 1px solid #dcdcde; }
.card-head h1 { font-size: 18px; line-height: 30px; margin-bottom: 19px; }
.actions { padding: 9px 18px; border: 1px solid #c6c6ca; display: flex; justify-content: space-between; }
.btn { height: 41px; padding: 0 15px; border-radius: 3px; font-size: 16px; }
.outline-red { width: 94px; border: 1px solid #e8203c; color: #e8203c; display: flex; align-items: center; gap: 4px; padding: 0 14px; }
.outline-blue { width: 68px; border: 1px solid #1670e4; color: #1670e4; }
.card-body { padding: 22px 32px; }
.controls { display: flex; justify-content: space-between; align-items: flex-start; }
.controls label { display: flex; align-items: center; gap: 4px; line-height: 33px; }
.controls label:last-child { gap: 8px; line-height: 35px; }
.select { display: flex; align-items: center; border: 1px solid #b4b4b8; border-radius: 3px; width: 85px; height: 33px; padding-right: 4px; }
.select select { appearance: none; flex: 1; width: 100%; padding: 0 0 0 13px; border: 0; background: none; color: inherit; font: inherit; }
.search { width: 194px; height: 35px; border: 1px solid #b4b4b8; border-radius: 3px; background: none; }
.grid { width: 100%; margin-top: 17px; table-layout: fixed; border: 1px solid #c8cace; border-spacing: 2px; border-collapse: separate; }
.c-id { width: 123px; }
.c { width: 156px; }
.c-date { width: 157px; }
.c-act { width: 127px; }
.grid th { height: 47px; padding: 0 9px 0 22px; text-align: left; font-weight: 500; border-right: 1px solid #e0e2e6; white-space: nowrap; }
.grid th div { display: flex; align-items: center; justify-content: space-between; color: #45474d; }
.grid th svg { color: #98989c; }
.grid td { height: 57px; padding: 1px 0 0 22px; border-right: 1px solid #e4e6ea; font-family: Lato, sans-serif; line-height: 28px; white-space: nowrap; overflow: hidden; }
.grid th:last-child, .grid td:last-child { border-right: 0; }
.grid tbody tr:nth-child(odd) td { background: #f1f1f1; }
.grid .tall td { height: 287px; }
.row-actions { display: flex; align-items: center; gap: 15px; padding-left: 2px; color: #166fe4; }
.row-actions .del { color: #f01020; }
.row-actions .login { width: 22px; height: 28px; margin-left: -2px; border-radius: 3px; display: grid; place-items: center; background: #166fe4; color: #fff; }

/* Dialog */
.backdrop { position: absolute; inset: 0; display: flex; justify-content: center; align-items: flex-start; padding-top: 143px; background: rgba(0, 0, 0, .5); }
.modal { width: 900px; background: #fff; border-radius: 6px; }
.modal-head { height: 78px; padding: 18px; display: flex; justify-content: space-between; align-items: flex-start; border-bottom: 1px solid #ebebed; }
.modal h2, .modal h3 { font-size: 18px; line-height: 24px; }
.modal h2 { margin-top: 3px; }
.close { width: 47px; display: grid; place-items: center; }
.modal-body { padding: 21px 18px 36px; }
.fields { display: grid; grid-template-columns: repeat(3, 1fr); column-gap: 34px; align-items: start; padding: 12px 9px 0; }
.fields h4 { grid-column: 1 / -1; margin-bottom: 8px; font-size: 17px; line-height: 20px; }
.fields h4.next { margin-top: 21px; padding-left: 1px; }
.field label { display: block; height: 23px; line-height: 23px; color: #575962; }
.field em { color: #f4575f; font-style: normal; }
.field i { color: #2b80ec; font-style: normal; font-weight: 700; font-size: 13px; vertical-align: 1px; }
.field input { width: 100%; height: 47px; padding: 0 18px; border: 1px solid #c0c0c4; border-radius: 4px; background: #fff; color: #505259; font: 16px Roboto, sans-serif; }
.field.multi label { margin-bottom: 5px; }
.picker { display: flex; align-items: flex-start; padding: 9px 13px 13px 14px; border: 1px solid #c0c0c4; border-radius: 4px; }
.tags { flex: 1; min-width: 0; display: flex; flex-wrap: wrap; }
.tag { max-width: 210px; margin-bottom: 1px; padding: 3px 2px 2px; background: #337ab7; border-radius: 2px; color: #fff; font-weight: 500; line-height: 24px; word-break: break-all; }
.more { width: 100%; padding: 6px 10px 0 0; text-align: right; line-height: 18px; }
.arrow { flex: none; margin-top: 6px; margin-left: -7px; border: 9px solid transparent; border-top-color: #999; border-bottom: 0; }
.modal-foot { display: flex; justify-content: center; gap: 18px; padding-top: 18px; border-top: 1px solid #ebebed; }
.blue { background: #2b80ec; color: #fff; font-weight: 500; }
.red { background: #f4575f; color: #fff; font-weight: 500; }

.toast { position: absolute; top: 7px; left: 828px; width: 672px; padding: 16px 8px 17px 23px; display: flex; align-items: flex-start; justify-content: space-between; background: #fff; border-left: 4px solid #f4575f; border-radius: 2px; box-shadow: 0 4px 20px rgba(30, 34, 50, .4); font: 700 16px/23px Lato, sans-serif; }
.toast button { margin-top: 7px; color: #a4a4a8; }

/* Taskbar */
.taskbar { flex: none; height: 72px; padding-bottom: 2px; border-top: 2px solid #4c4537; background: #2f2519; color: #fff; display: grid; grid-template-columns: 1fr auto 1fr; align-items: center; font-family: "Open Sans", sans-serif; font-size: 17px; }
.weather { display: flex; align-items: center; gap: 14px; padding-left: 32px; }
.sun { position: relative; }
.count { position: absolute; top: -13px; left: 14px; width: 24px; height: 24px; border-radius: 12px; background: #c42b1c; color: #fff; font-size: 15px; line-height: 24px; text-align: center; }
.count.blue { top: 4px; left: 28px; width: 32px; background: #4cc2ff; color: #111; font-weight: 400; }
.two { display: flex; flex-direction: column; line-height: 24px; }
.soft { color: #dcd6cc; }
.apps { display: flex; align-items: center; }
.app { position: relative; width: 60px; height: 60px; margin: 0 3px; border-radius: 6px; display: grid; place-items: center; }
.finder { width: 326px; height: 44px; margin: 0 5px 0 6px; padding: 0 8px 0 15px; display: flex; align-items: center; gap: 15px; background: #f3f2f0; border-radius: 22px; }
.finder input { flex: 1; min-width: 0; padding: 0; border: 0; background: none; font: 18px "Open Sans", sans-serif; }
.finder input::placeholder { color: #666; }
.current { background: #40372b; }
.current::after, .running::after { content: ""; position: absolute; bottom: 1px; height: 4px; border-radius: 2px; left: 18px; width: 24px; background: #4cc2ff; }
.running::after { left: 26px; width: 8px; background: #a09a92; }
.tray { display: flex; align-items: center; justify-content: flex-end; gap: 11px; padding-right: 29px; }
.mic { margin: 0 17px 0 21px; }
.clock { width: 96px; text-align: right; }
```
